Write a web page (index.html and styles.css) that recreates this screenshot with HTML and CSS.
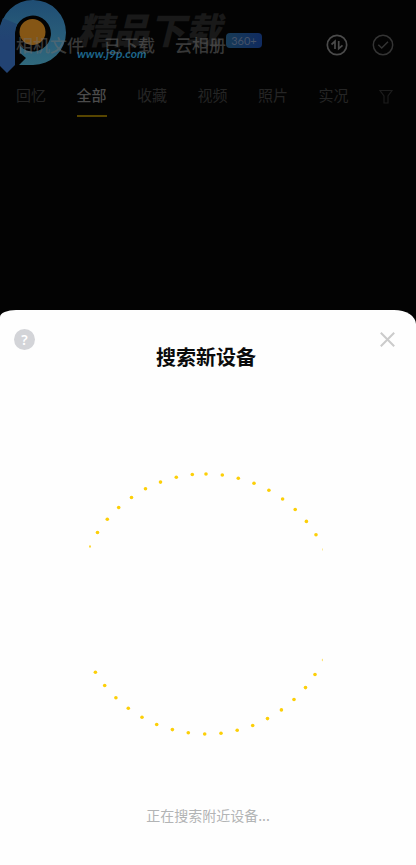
FILE: index.html
```html
<!DOCTYPE html>
<html lang="zh-CN">
<head>
<meta charset="utf-8">
<meta name="viewport" content="width=device-width, initial-scale=1">
<title>搜索新设备</title>
<link rel="stylesheet" href="styles.css">
</head>
<body>
<div class="screen">
  <header class="album">
    <div class="watermark">
      <svg class="mark" width="67" height="74" viewBox="0 0 67 74">
        <defs>
          <linearGradient id="ring" x1="0" y1="0" x2="0" y2="1"><stop offset="0" stop-color="#235681"/><stop offset="1" stop-color="#35748a"/></linearGradient>
          <linearGradient id="stem" x1="0" y1="0" x2="0" y2="1"><stop offset="0" stop-color="#25517f"/><stop offset=".4" stop-color="#264b80"/></linearGradient>
        </defs>
        <path fill="url(#ring)" d="M0 32A33 32.500 0 1 1 33 65H19L26 58L20 53V46A18 18 0 1 0 15 32V50H0Z"/>
        <path fill="url(#stem)" d="M0 26L3 18L17 24Q15 28 15 34V65L7 73L0 66Z"/>
        <circle cx="32.500" cy="32" r="13" fill="#946018"/>
      </svg>
      <div class="brand">
        <span class="brand-name">精品下载</span>
        <span class="brand-url">www.j9p.com</span>
      </div>
    </div>
    <div class="topbar">
      <nav class="sources">
        <a href="#">相机文件</a>
        <a href="#">已下载</a>
        <a href="#" class="cloud">云相册<span class="badge">360+</span></a>
      </nav>
      <div class="actions">
        <button type="button" class="icon-button" aria-label="传输">
          <svg width="22" height="22" viewBox="0 0 22 22" fill="none" stroke="#4b4b4b" stroke-width="1.700"><circle cx="11" cy="11" r="9.700"/><path d="M5.500 10.500L9 7.300V15M12.700 7V14.700L16.500 11.300"/></svg>
        </button>
        <button type="button" class="icon-button" aria-label="选择">
          <svg width="22" height="22" viewBox="0 0 22 22" fill="none" stroke="#343434" stroke-width="1.500"><circle cx="11" cy="11" r="9.700"/><path d="M6.300 10.800L9.700 14L16 7.800"/></svg>
        </button>
      </div>
    </div>
    <nav class="tabs">
      <a href="#">回忆</a>
      <a href="#" class="active">全部</a>
      <a href="#">收藏</a>
      <a href="#">视频</a>
      <a href="#">照片</a>
      <a href="#">实况</a>
      <button type="button" class="icon-button" aria-label="筛选">
        <svg width="14" height="16" viewBox="0 0 14 16" fill="none" stroke="#1c1c1c" stroke-width="1.200"><path d="M1 1.500H13L9 7V14H5V7Z"/></svg>
      </button>
    </nav>
  </header>
  <main class="sheet">
    <div class="sheet-bar">
      <button type="button" class="help" aria-label="帮助">?</button>
      <button type="button" class="icon-button" aria-label="关闭">
        <svg width="17" height="17" viewBox="0 0 17 17" fill="none" stroke="#cbcbcb" stroke-width="2"><path d="M1.800 1.800L15.200 15.200M15.200 1.800L1.800 15.200"/></svg>
      </button>
    </div>
    <h1>搜索新设备</h1>
    <svg class="radar" viewBox="84 470 248 268" width="248" height="268" fill="#fccf08">
      <path d="M89 545.500H91V547.500H89Z" opacity=".8"/>
      <circle cx="97.500" cy="532.500" r="1.800"/><circle cx="107.300" cy="519.300" r="1.800"/><circle cx="118.700" cy="507.500" r="1.800"/>
      <circle cx="131.500" cy="497.500" r="1.800"/><circle cx="145.500" cy="488.800" r="1.800"/><circle cx="160.500" cy="482.100" r="1.800"/>
      <circle cx="176.300" cy="477.300" r="1.800"/><circle cx="192.300" cy="474.500" r="1.800"/><circle cx="206" cy="474" r="1.800"/>
      <circle cx="222.300" cy="475" r="1.800"/><circle cx="238.300" cy="478.200" r="1.800"/><circle cx="254" cy="483.300" r="1.800"/>
      <circle cx="268.900" cy="490.300" r="1.800"/><circle cx="282.600" cy="499" r="1.800"/><circle cx="295.200" cy="509.500" r="1.800"/>
      <circle cx="306.400" cy="521.400" r="1.800"/><circle cx="316" cy="534.800" r="1.800"/>
      <path opacity=".4" d="M322 548.500H323V550.500H322Z"/>
      <circle cx="95.400" cy="672.300" r="1.800"/><circle cx="104.700" cy="685.500" r="1.800"/><circle cx="115.900" cy="697.700" r="1.800"/>
      <circle cx="128.300" cy="708.300" r="1.800"/><circle cx="142" cy="717.200" r="1.800"/><circle cx="156.700" cy="724.500" r="1.800"/>
      <circle cx="172.400" cy="729.600" r="1.800"/><circle cx="188.300" cy="732.800" r="1.800"/><circle cx="204.700" cy="734" r="1.800"/>
      <circle cx="221" cy="733.300" r="1.800"/><circle cx="237.200" cy="730.300" r="1.800"/><circle cx="252.700" cy="725.500" r="1.800"/>
      <circle cx="267.500" cy="718.600" r="1.800"/><circle cx="281.400" cy="709.900" r="1.800"/><circle cx="294" cy="699.500" r="1.800"/>
      <circle cx="305.500" cy="687.600" r="1.800"/><circle cx="315" cy="674.500" r="1.800"/>
      <path opacity=".6" d="M321.500 660L323 658.500V661.500Z"/>
    </svg>
    <p class="status">正在搜索附近设备...</p>
  </main>
</div>
</body>
</html>
```
FILE: styles.css
```css
* {
  box-sizing: border-box;
}

body {
  margin: 0;
  background: #030303;
  font-family: "Noto Sans CJK SC", sans-serif;
}

a {
  color: inherit;
  text-decoration: none;
}

button {
  padding: 0;
  border: 0;
  background: none;
  font: inherit;
}

.icon-button {
  display: flex;
}

.screen {
  display: flex;
  flex-direction: column;
  min-height: 100vh;
}

.album {
  position: relative;
  height: 310px;
  padding-top: 28px;
}

.topbar {
  position: relative;
  display: flex;
  align-items: center;
  justify-content: space-between;
  height: 34px;
  padding: 0 22px 0 16px;
}

.sources {
  display: flex;
  gap: 20px;
  color: rgba(110, 110, 110, 0.5);
  font-size: 17px;
  font-weight: 500;
  line-height: 34px;
}

.cloud {
  position: relative;
}

.badge {
  position: absolute;
  top: 5px;
  left: 100%;
  width: 36px;
  border-radius: 4px;
  background: linear-gradient(90deg, #173a55, #102b60);
  color: #465369;
  font: 11px/15px Lato, sans-serif;
  text-align: center;
}

.actions {
  display: flex;
  gap: 24px;
}

.tabs {
  display: flex;
  justify-content: space-between;
  align-items: center;
  margin-top: 15px;
  padding: 0 23px 0 16px;
  color: #252525;
  font-size: 15px;
  line-height: 32px;
}

.tabs a {
  border-top: 2px solid transparent;
  border-bottom: 2px solid transparent;
  padding-bottom: 4px;
}

.tabs .active {
  border-bottom-color: #574500;
  color: #4b4b4b;
  font-weight: 500;
}

.watermark {
  position: absolute;
  top: 0;
  left: 0;
  display: flex;
  gap: 10px;
  pointer-events: none;
}

.mark {
  opacity: 0.9;
}

.brand {
  display: flex;
  flex-direction: column;
  padding-top: 9px;
  font-style: italic;
  font-weight: 900;
}

.brand-name {
  color: #191919;
  font-size: 36px;
  line-height: 38px;
}

.brand-url {
  color: #1d668b;
  font: italic bold 12px/14px Lato, sans-serif;
}

.sheet {
  display: flex;
  flex: 1;
  flex-direction: column;
  align-items: center;
  border-radius: 16px 22px 0 0 / 7px 14px 0 0;
  background: #fefefe;
}

.sheet-bar {
  display: flex;
  align-self: stretch;
  align-items: center;
  justify-content: space-between;
  padding: 19px 20px 0 14px;
}

.help {
  width: 21px;
  height: 21px;
  border-radius: 50%;
  background: #d3d4d8;
  color: #fff;
  font: 600 14px/21px "Noto Sans", sans-serif;
}

h1 {
  margin: -7px 4px 0 0;
  color: #0b0b0b;
  font-size: 20px;
  font-weight: 700;
  line-height: 28px;
}

.radar {
  margin-top: 99px;
}

.status {
  margin: 67px 0 0;
  color: #b2b4b5;
  font-size: 14px;
  line-height: 20px;
}
```
